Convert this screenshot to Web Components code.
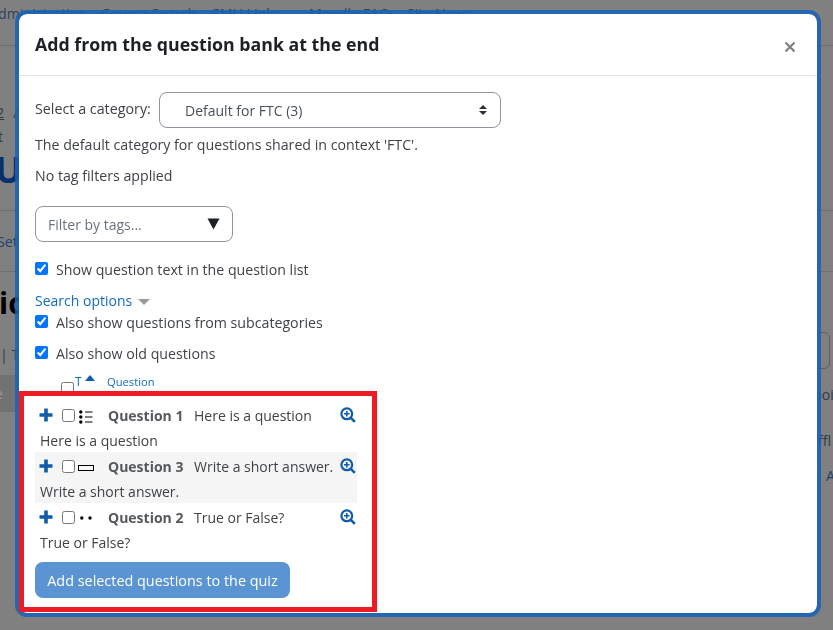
<!DOCTYPE html>
<html>
<head>
<meta charset="utf-8">
<title>Question bank</title>
<style>
    html, body { margin: 0; padding: 0; height: 100%; overflow: hidden; background: #808080; }
    body { font-family: "Open Sans", "Noto Sans", sans-serif; font-size: 14px; color: #3f4347; }
</style>
</head>
<body>
<page-behind></page-behind>
<bank-modal>
    <span slot="title">Add from the question bank at the end</span>
    <category-select label="Select a category:">Default for FTC (3)</category-select>
    <p-line top="6">The default category for questions shared in context 'FTC'.</p-line>
    <p-line top="10">No tag filters applied</p-line>
    <tag-filter></tag-filter>
    <check-line top="17" checked>Show question text in the question list</check-line>
    <search-toggle></search-toggle>
    <check-line top="1" checked>Also show questions from subcategories</check-line>
    <check-line top="10" checked>Also show old questions</check-line>
    <bank-head></bank-head>
    <question-row icon="multi" name="Question 1" text="Here is a question"></question-row>
    <question-row icon="short" name="Question 3" text="Write a short answer." striped></question-row>
    <question-row icon="tf" name="Question 2" text="True or False?"></question-row>
    <add-button>Add selected questions to the quiz</add-button>
</bank-modal>
<red-mark></red-mark>

<script>
// the dimmed course page that shows round the dialog
class PageBehind extends HTMLElement{
    constructor(){
        super();
        this.attachShadow({mode: 'open'});
        this.shadowRoot.innerHTML = `
            <style>
                :host { display: block; height: 630px; overflow: hidden; background: #808080; color: #2f3a44; font-size: 14.2px; }
                .row { display: flex; white-space: nowrap; overflow: hidden; }
                .nav { height: 45px; border-bottom: 1px solid #6f6f6f; margin-left: -11px; line-height: 27px; color: #2f4058; }
                .nav span:nth-child(1) { width: 112px; }
                .nav span:nth-child(2) { width: 111px; }
                .nav span:nth-child(3) { width: 97px; }
                .nav span:nth-child(4) { width: 98px; }
                .crumb { height: 76px; align-items: flex-end; color: #2f3a44; }
                .crumb u { margin-left: -4px; margin-right: 9px; }
                .small { height: 24px; align-items: flex-end; margin-left: -2px; }
                .big { height: 48px; font-size: 36px; font-weight: 700; color: #07316b; align-items: flex-end; margin-left: -5px; line-height: 48px; }
                .tabs { margin-top: 16px; height: 60px; border-top: 1px solid #6f6f6f; border-bottom: 1px solid #6f6f6f; align-items: center; color: #22416b; margin-left: -3px; }
                .head { height: 61px; align-items: center; font-size: 30px; font-weight: 700; color: #000; margin-left: -1px; }
                .sub { height: 42px; align-items: center; }
                .box { position: absolute; left: 790px; top: 332px; width: 38px; height: 35px; border: 1px solid #5d5d5d; border-radius: 6px; }
                .bar { background: #727272; height: 37px; width: 20px; line-height: 38px; text-indent: -5px; color: #999; overflow: hidden; }
                .right { position: absolute; white-space: nowrap; }
            </style>
            <div class="row nav"><span>Administration</span><span>Course Search</span><span>SMU Links</span><span>Moodle FAQ</span><span>Site News</span></div>
            <div class="row crumb"><span><u>2</u>/</span></div>
            <div class="row small"><span>t</span></div>
            <div class="row big"><span>U</span></div>
            <div class="row tabs"><span>Sett</span></div>
            <div class="row head"><span>ic</span></div>
            <div class="row sub"><span>| T</span></div>
            <div class="bar">e</div>
            <div class="box"></div>
            <span class="right" style="top:385px;left:813px">poi</span>
            <span class="right" style="top:431px;left:818px">ffl</span>
            <span class="right" style="top:466px;left:826px;color:#22416b">A</span>
        `;
    }
}
customElements.define('page-behind', PageBehind);

class BankModal extends HTMLElement{
    constructor(){
        super();
        this.attachShadow({mode: 'open'});
        this.shadowRoot.innerHTML = `
            <style>
                :host { display: block; position: fixed; left: 15px; top: 10px; width: 806px; height: 607px; box-sizing: border-box; background: #fff; background-clip: padding-box; border: 4px solid rgba(25,98,182,.88); border-radius: 12px; overflow: hidden; }
                header { height: 61px; display: flex; align-items: center; justify-content: space-between; padding: 0 20px 0 16px; border-bottom: 1px solid #dee2e6; }
                h1 { margin: 0; font-size: 17.75px; font-weight: 700; color: #1d2125; line-height: 1.3; white-space: nowrap; }
                #close { width: 14px; height: 14px; margin-top: 4px; }
                main { padding: 16px 16px 0; }
            </style>
            <header>
                <h1><slot name="title"></slot></h1>
                <svg id="close" viewBox="0 0 14 14"><path d="M2.5 2.5l9 9M11.5 2.5l-9 9" stroke="#808080" stroke-width="2.2" fill="none"/></svg>
            </header>
            <main><slot></slot></main>
        `;
    }
}
customElements.define('bank-modal', BankModal);

class CategorySelect extends HTMLElement{
    constructor(){
        super();
        this.attachShadow({mode: 'open'});
        this.shadowRoot.innerHTML = `
            <style>
                :host { display: flex; align-items: center; height: 36px; }
                label { width: 124px; margin-top: -3px; font-size: 14.3px; white-space: nowrap; }
                #box { width: 342px; height: 36px; box-sizing: border-box; display: flex; align-items: center; justify-content: space-between; border: 1px solid #8f959e; border-radius: 8px; padding: 0 12px 0 25px; color: #495057; }
                svg { width: 10px; height: 14px; }
            </style>
            <label>${this.getAttribute('label')}</label>
            <div id="box"><span><slot></slot></span><svg viewBox="0 0 10 14"><path d="M5 2l4 4H1zM5 12L1 8h8z" fill="#2b2f33"/></svg></div>
        `;
    }
}
customElements.define('category-select', CategorySelect);

class PLine extends HTMLElement{
    constructor(){
        super();
        this.attachShadow({mode: 'open'});
        this.shadowRoot.innerHTML = `
            <style>
                :host { display: block; font-size: 14.2px; line-height: 21px; height: 21px; white-space: nowrap; margin-top: ${this.getAttribute('top') || 0}px; }
            </style>
            <slot></slot>
        `;
    }
}
customElements.define('p-line', PLine);

class TagFilter extends HTMLElement{
    constructor(){
        super();
        this.attachShadow({mode: 'open'});
        this.shadowRoot.innerHTML = `
            <style>
                :host { display: flex; align-items: center; justify-content: space-between; width: 198px; height: 36px; box-sizing: border-box; margin-top: 20px; border: 1px solid #8f959e; border-radius: 8px; padding: 0 12px; color: #6a737b; }
                svg { width: 13px; height: 12px; }
            </style>
            <span>Filter by tags...</span>
            <svg viewBox="0 0 13 12"><path d="M0.5 0.5h12L6.5 11.5z" fill="#1d2125"/></svg>
        `;
    }
}
customElements.define('tag-filter', TagFilter);

class CheckLine extends HTMLElement{
    constructor(){
        super();
        this.attachShadow({mode: 'open'});
        this.shadowRoot.innerHTML = `
            <style>
                :host { display: flex; align-items: center; gap: 8px; height: 21px; font-size: 14.2px; white-space: nowrap; margin-top: ${this.getAttribute('top') || 0}px; }
                input { margin: 0 0 2px; width: 13px; height: 13px; }
            </style>
            <input type="checkbox" ${this.hasAttribute('checked') ? 'checked' : ''}>
            <span><slot></slot></span>
        `;
    }
}
customElements.define('check-line', CheckLine);

class SearchToggle extends HTMLElement{
    constructor(){
        super();
        this.attachShadow({mode: 'open'});
        this.shadowRoot.innerHTML = `
            <style>
                :host { display: flex; align-items: center; gap: 6px; height: 21px; margin-top: 10px; color: #0f6cbf; }
                svg { width: 12px; height: 6px; margin-top: 3px; }
            </style>
            <span>Search options</span>
            <svg viewBox="0 0 12 6"><path d="M0 0h12L6 6z" fill="#9a9a9a"/></svg>
        `;
    }
}
customElements.define('search-toggle', SearchToggle);

class BankHead extends HTMLElement{
    constructor(){
        super();
        this.attachShadow({mode: 'open'});
        this.shadowRoot.innerHTML = `
            <style>
                :host { display: grid; grid-template-columns: 40px 10px 22px 1fr; height: 37px; color: #0f6cbf; }
                input { margin: 18px 0 0 0; width: 13px; height: 13px; justify-self: end; margin-right: 1px; }
                .t { font-size: 12px; padding-top: 10px; line-height: 15px; }
                svg { width: 10px; height: 6px; margin-top: 11px; }
                .q { font-size: 11.2px; padding-top: 10px; line-height: 15px; }
            </style>
            <input type="checkbox">
            <span class="t">T</span>
            <svg viewBox="0 0 10 6"><path d="M5 0l5 6H0z" fill="#0f5ca8"/></svg>
            <span class="q">Question</span>
        `;
    }
}
customElements.define('bank-head', BankHead);

const QTYPE_ICONS = {
    multi: '<circle cx="3.8" cy="5" r="1.7"/><circle cx="3.8" cy="10" r="1.7"/><circle cx="3.8" cy="15" r="1.7"/><path d="M8 5h7.5M8 10h7.5M8 15h7.5" stroke="#000" stroke-width="1" fill="none"/>',
    short: '<rect x="1.5" y="7.5" width="15" height="5" fill="none" stroke="#000"/>',
    tf: '<circle cx="4.8" cy="9" r="1.7"/><circle cx="13" cy="9" r="1.7"/>'
};

class QuestionRow extends HTMLElement{
    constructor(){
        super();
        this.attachShadow({mode: 'open'});
        this.shadowRoot.innerHTML = `
            <style>
                :host { display: block; width: 322px; height: 51px; padding-left: 5px; box-sizing: border-box; }
                :host([striped]) { background: #f5f5f5; }
                .top { display: grid; grid-template-columns: 23px 15px 31px 86px 146px 17px; align-items: center; height: 28px; margin-left: -1px; }
                input { margin: 0; width: 13px; height: 13px; }
                b { font-weight: 700; color: #55595d; white-space: nowrap; }
                .txt { white-space: nowrap; }
                .qtext { line-height: 21px; margin-top: 1px; }
                svg { display: block; overflow: visible; }
            </style>
            <div class="top">
                <svg width="14" height="14" viewBox="0 0 14 14"><path d="M7 0.5v13M0.5 7h13" stroke="#0f5ca8" stroke-width="3.6" fill="none"/></svg>
                <input type="checkbox">
                <svg width="16" height="16" viewBox="0 0 16 16">${QTYPE_ICONS[this.getAttribute('icon')]}</svg>
                <b>${this.getAttribute('name')}</b>
                <span class="txt">${this.getAttribute('text')}</span>
                <svg width="16" height="16" viewBox="0 0 16 16"><circle cx="6.8" cy="6.8" r="5.4" fill="none" stroke="#0f5ca8" stroke-width="2.2"/><path d="M10.8 10.8l4 4" stroke="#0f5ca8" stroke-width="2.6"/><path d="M6.8 4v5.6M4 6.8h5.6" stroke="#0f5ca8" stroke-width="1.6"/></svg>
            </div>
            <div class="qtext">${this.getAttribute('text')}</div>
        `;
    }
}
customElements.define('question-row', QuestionRow);

class AddButton extends HTMLElement{
    constructor(){
        super();
        this.attachShadow({mode: 'open'});
        this.shadowRoot.innerHTML = `
            <style>
                :host { display: flex; align-items: center; justify-content: center; width: 255px; height: 36px; margin-top: 8px; background: #5b94d3; color: #fff; border-radius: 8px; font-size: 14.4px; white-space: nowrap; }
            </style>
            <slot></slot>
        `;
    }
}
customElements.define('add-button', AddButton);

// the red rectangle somebody drew on the screenshot
class RedMark extends HTMLElement{
    constructor(){
        super();
        this.attachShadow({mode: 'open'});
        this.shadowRoot.innerHTML = `
            <style>
                :host { display: block; position: fixed; left: 19px; top: 391px; width: 358px; height: 221px; box-sizing: border-box; border: 5px solid #ed1c24; pointer-events: none; }
            </style>
        `;
    }
}
customElements.define('red-mark', RedMark);
</script>
</body>
</html>
